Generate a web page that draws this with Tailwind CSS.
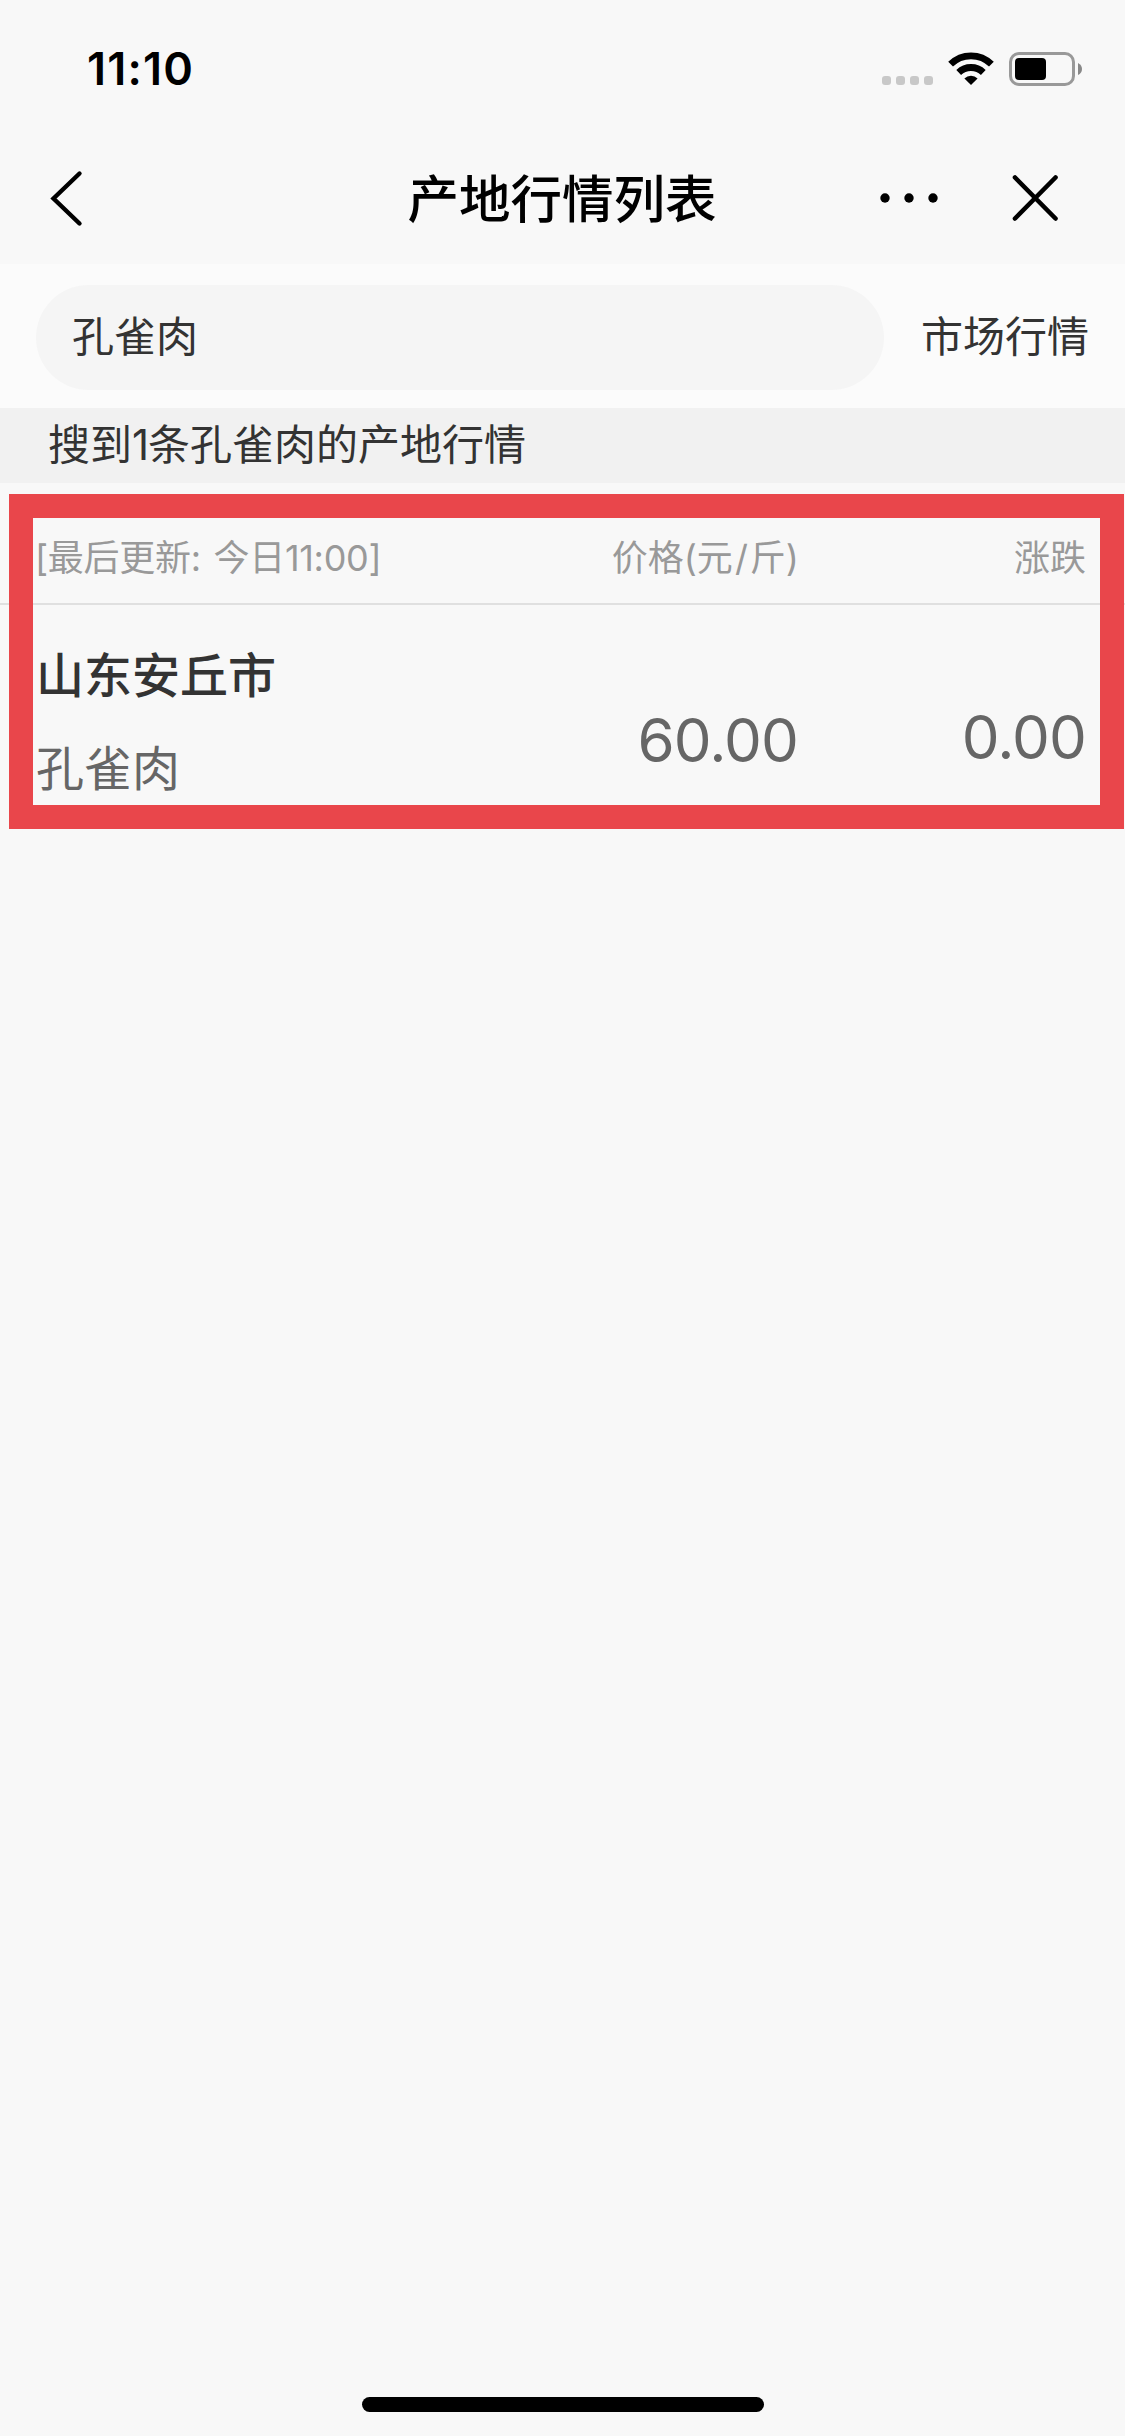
<!DOCTYPE html>
<html lang="zh-CN">
<head>
<meta charset="utf-8">
<title>产地行情列表</title>
<script src="https://cdn.jsdelivr.net/npm/@tailwindcss/browser@4"></script>
</head>
<body class="w-[1125px] h-[2436px] bg-[#f8f8f8] font-['Inter','Noto_Sans_CJK_SC',sans-serif] text-[#333] overflow-hidden">
<div class="flex flex-col h-full w-full">
  <!-- status bar -->
  <div class="flex h-[132px] items-start justify-between pl-[87px] pr-[43px] text-black">
    <div class="pt-[42px] text-[45px] leading-[54px] font-semibold tracking-[1.2px]">11:10</div>
    <svg class="mt-[50px]" width="202" height="38" viewBox="880 50 202 38">
      <g fill="#c8c8c8">
        <rect x="882" y="76" width="9" height="9" rx="3"/><rect x="896" y="76" width="9" height="9" rx="3"/>
        <rect x="910" y="76" width="9" height="9" rx="3"/><rect x="924" y="76" width="9" height="9" rx="3"/>
      </g>
      <path d="M971 85L964.4 78.4A9.4 9.4 0 0 1 977.6 78.4Z" fill="#000"/>
      <path d="M958.7 72.5A17.6 17.6 0 0 1 983.3 72.5M950.6 64.2A29 29 0 0 1 991.4 64.2" fill="none" stroke="#000" stroke-width="6.8"/>
      <rect x="1010.5" y="53.5" width="63" height="31" rx="8.5" fill="none" stroke="#999" stroke-width="3"/>
      <rect x="1015" y="58" width="31" height="22" rx="4"/>
      <path d="M1078 63Q1082 65 1082 69T1078 75Z" fill="#888"/>
    </svg>
  </div>
  <!-- navigation bar -->
  <div class="grid h-[132px] grid-cols-[360px_1fr_360px] items-center text-black">
    <svg class="ml-[48px]" width="38" height="64" viewBox="48 166 38 64"><path d="M79.5 173.5L53.5 198.5L79.5 223.5" fill="none" stroke="#000" stroke-width="4.4" stroke-linecap="round" stroke-linejoin="miter"/></svg>
    <h1 class="text-center text-[51.5px] leading-[60px] font-medium pr-[1px] pt-[1px]">产地行情列表</h1>
    <svg width="360" height="64" viewBox="765 166 360 64"><circle cx="885" cy="198" r="4.7"/><circle cx="909" cy="198" r="4.7"/><circle cx="933" cy="198" r="4.7"/><path d="M1015 177.5L1055.5 218.5M1055.5 177.5L1015 218.5" stroke="#000" stroke-width="4.6" stroke-linecap="round"/></svg>
  </div>
  <!-- search -->
  <div class="flex h-[144px] items-center justify-between bg-[#fbfbfb] px-[36px] pt-[3px] text-[42px] leading-[60px]">
    <div class="flex h-[105px] w-[848px] items-center rounded-full bg-[#f5f5f5] pl-[36px] pb-[2px]">孔雀肉</div>
    <div class="pb-[2px]">市场行情</div>
  </div>
  <div class="flex h-[75px] items-center bg-[#f1f1f1] pl-[48px] pb-[2px] text-[42px] leading-[60px]">搜到<span class="-mr-[1px]">1</span>条孔雀肉的产地行情</div>
  <!-- price table -->
  <div class="relative">
    <div class="grid h-[122px] grid-cols-[1fr_300px_288px] border-b-2 border-[#e0e0e0] pt-[49px] pl-[35px] pr-[39px] text-[36px] leading-[52px] text-[#999]">
      <div class="whitespace-pre tracking-[-0.3px]">[最后更新:<span class="ml-[3px]"> </span>今日11:00]</div>
      <div class="-mr-[1px] text-right">价格(元<span class="mx-[2px]">/</span>斤)</div>
      <div class="text-right">涨跌</div>
    </div>
    <div class="grid h-[210px] grid-cols-[1fr_300px_288px] pl-[36px] pr-[39px] text-[60px] leading-[72px] text-[#666]">
      <div class="flex flex-col pt-[37px] text-[48px]">
        <div class="leading-[68px] font-medium text-[#333]">山东安丘市</div>
        <div class="mt-[25px] leading-[68px]">孔雀肉</div>
      </div>
      <div class="pt-[99px] text-right tracking-[-0.9px]">60.00</div>
      <div class="pt-[96px] text-right tracking-[-0.9px]">0.00</div>
    </div>
    <!-- highlight frame over the table -->
    <div class="absolute left-[9px] top-[11px] h-[335px] w-[1115px] border-[24px] border-[#e9464b]"></div>
  </div>
  <!-- home indicator -->
  <div class="mt-auto mb-[24px] ml-[362px] h-[15px] w-[402px] rounded-full bg-black"></div>
</div>
</body>
</html>
